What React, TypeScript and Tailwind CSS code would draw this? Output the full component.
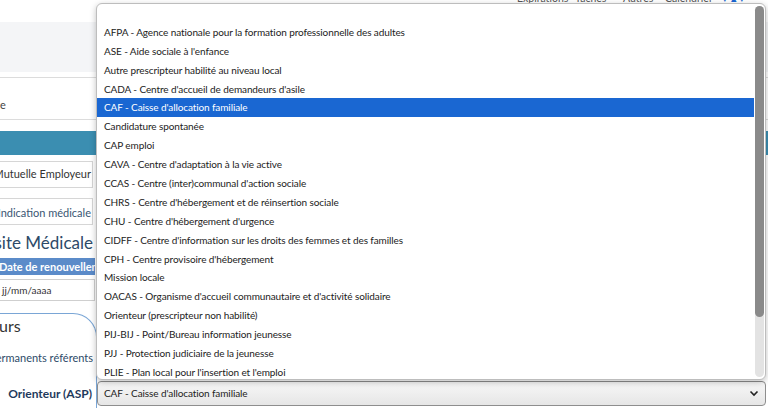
import React from "react";

const options = [
  "",
  "AFPA - Agence nationale pour la formation professionnelle des adultes",
  "ASE - Aide sociale à l'enfance",
  "Autre prescripteur habilité au niveau local",
  "CADA - Centre d'accueil de demandeurs d'asile",
  "CAF - Caisse d'allocation familiale",
  "Candidature spontanée",
  "CAP emploi",
  "CAVA - Centre d'adaptation à la vie active",
  "CCAS - Centre (inter)communal d'action sociale",
  "CHRS - Centre d'hébergement et de réinsertion sociale",
  "CHU - Centre d'hébergement d'urgence",
  "CIDFF - Centre d'information sur les droits des femmes et des familles",
  "CPH - Centre provisoire d'hébergement",
  "Mission locale",
  "OACAS - Organisme d'accueil communautaire et d'activité solidaire",
  "Orienteur (prescripteur non habilité)",
  "PIJ-BIJ - Point/Bureau information jeunesse",
  "PJJ - Protection judiciaire de la jeunesse",
  "PLIE - Plan local pour l'insertion et l'emploi",
];

export default function App() {
  return (
    <div
      className="relative w-[768px] h-[408px] overflow-hidden bg-white text-[#333]"
      style={{ fontFamily: 'Lato, "Noto Sans", sans-serif' }}
    >
      {/* Background page */}
      <div className="flex flex-col">
        <div className="h-[22px] overflow-hidden flex pl-[517px]">
          <div className="flex text-[10.5px] leading-[12px] text-[#555] -mt-[8px] h-[12px] whitespace-nowrap">
            <span className="w-[58px]">Expirations</span>
            <span className="w-[48px]">Tâches</span>
            <span className="w-[42px]">Autres</span>
            <span className="w-[57px]">Calendrier</span>
            <span className="text-[#1a67d2]">▾ ▴ ▾</span>
          </div>
        </div>
        <div className="h-[50px] bg-[#f4f5f7]" />
        <div className="h-[5px]" />
        <div className="h-[43px] border-t border-b border-[#dcdcdc] flex items-center text-[11px] text-[#444]">
          <span className="mt-[14px]">e</span>
        </div>
        <div className="h-[11px]" />
        <div className="h-[24px] bg-[#3b8eb1]" />
        <div className="h-[6px]" />
        <div className="w-[93px] h-[27px] border border-l-0 border-[#d6d6d6] flex items-center justify-end pr-[1px] overflow-hidden whitespace-nowrap text-[11px] text-[#333]">
          <span className="shrink-0">Mutuelle Employeur</span>
        </div>
        <div className="h-[10px]" />
        <div className="w-[93px] h-[27px] border border-l-0 border-[#d6d6d6] flex items-center justify-end pr-[1px] overflow-hidden whitespace-nowrap text-[11px] text-[#3a5673]">
          <span className="shrink-0 mt-[3px]">Indication médicale</span>
        </div>
        <div className="w-[93px] h-[33px] flex items-center justify-end overflow-hidden whitespace-nowrap text-[17px] text-[#2d4a68]">
          <span className="shrink-0 mt-[2px]">Visite Médicale</span>
        </div>
        <div className="w-[95px] h-[17px] bg-[#5b8bc9] overflow-hidden whitespace-nowrap text-[11px] leading-[17px] font-bold text-white">
          <span className="-ml-[1px]">Date de renouvellement</span>
        </div>
        <div className="h-[4px]" />
        <div className="w-[95px] h-[22px] border border-l-0 border-[#cfcfcf] flex items-center text-[10px] text-[#333] pl-[2px]">
          jj/mm/aaaa
        </div>
        <div className="h-[12px]" />
        <div className="w-[97px] h-[100px] border-t border-r border-[#7aa6d6] rounded-tr-[24px] flex flex-col">
          <div className="h-[24px] text-[16px] leading-[24px] text-[#333] overflow-hidden whitespace-nowrap">
            <span className="-ml-[1px]">urs</span>
          </div>
          <div className="h-[11px]" />
          <div className="w-[93px] h-[18px] flex justify-end text-[11px] leading-[18px] text-[#2d4a68] whitespace-nowrap overflow-hidden">
            <span className="shrink-0">Partenaires permanents référents</span>
          </div>
        </div>
      </div>

      {/* Orienteur label + select */}
      <div className="absolute left-0 top-[381px] w-[766px] h-[25px] flex items-center">
        <div className="w-[92px] text-right text-[12px] font-bold text-[#1f3a5c] whitespace-nowrap">
          Orienteur (ASP)
        </div>
        <div className="ml-[5px] flex-1 h-[25px] rounded-[4px] border border-[#8e8e8e] bg-gradient-to-b from-[#f7f7f7] to-[#e6e6e6] flex items-center justify-between pl-[6px] pr-[6px] text-[10px] tracking-[-0.1px] text-[#222]">
          <span>CAF - Caisse d'allocation familiale</span>
          <svg width="10" height="7" viewBox="0 0 10 7">
            <path d="M1.5 1.5 L5 5 L8.5 1.5" fill="none" stroke="#222" strokeWidth="1.6" />
          </svg>
        </div>
      </div>

      {/* Dropdown list overlay */}
      <div className="absolute left-[96px] top-[3px] w-[670px] h-[377px] bg-white border border-[#bdbdbd] rounded-[6px] shadow-[0_2px_6px_rgba(0,0,0,0.25)] overflow-hidden">
        <div className="flex flex-col pr-[11px]">
          {options.map((o, i) => (
            <div
              key={i}
              className={
                i === 5
                  ? "h-[18.9px] flex items-center pl-[7px] text-[10px] tracking-[-0.1px] whitespace-nowrap bg-[#1a67d2] text-white"
                  : "h-[18.9px] flex items-center pl-[7px] text-[10px] tracking-[-0.1px] whitespace-nowrap text-[#222]"
              }
            >
              {o}
            </div>
          ))}
        </div>
        <div className="absolute right-[1px] top-[2px] w-[9px] h-[371px] rounded-[5px] bg-[#e3e3e3]">
          <div className="w-[9px] h-[311px] rounded-[5px] bg-[#8a8a8a]" />
        </div>
      </div>
    </div>
  );
}
